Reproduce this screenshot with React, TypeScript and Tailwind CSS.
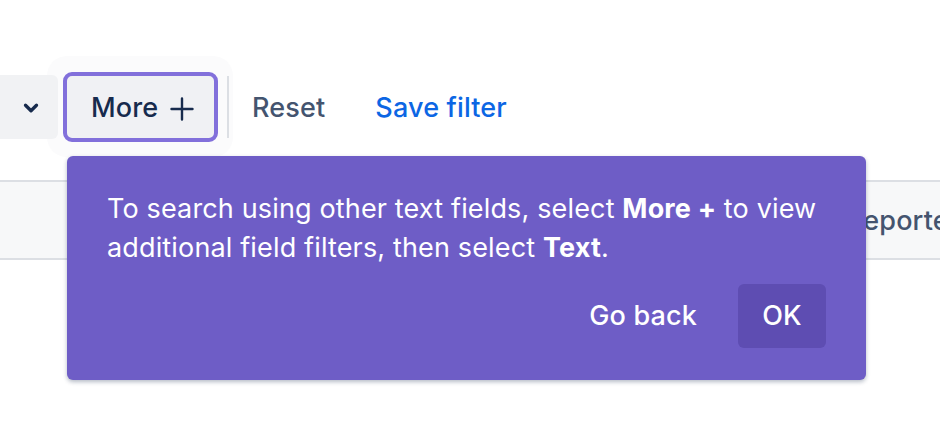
import { ChevronDown } from "lucide-react";

function PlusIcon() {
  return (
    <svg width="24" height="24" viewBox="0 0 24 24" className="text-[#172b4d]">
      <path d="M12 1.5v21M1.5 12h21" stroke="currentColor" strokeWidth="2.4" strokeLinecap="round" />
    </svg>
  );
}

export default function App() {
  return (
    <div className="relative w-[940px] h-[434px] overflow-hidden bg-white font-['Inter','Liberation_Sans',sans-serif] text-[27px] tracking-[0.15px]">
      {/* Filter toolbar */}
      <div className="flex items-center pt-[75px] h-[139px]">
        <button className="relative z-10 -ml-[20px] w-[78px] h-[64px] flex items-center justify-end pr-[16px] pt-[2px] rounded-r-[6px] bg-[#f1f2f4] text-[#172b4d]">
          <ChevronDown size={22} strokeWidth={3.6} />
        </button>

        <div className="relative ml-[8px]">
          {/* spotlight pulse */}
          <div className="absolute -left-[19px] -right-[18px] -top-[19px] -bottom-[18px] rounded-[20px] bg-[#fbfbfc]" />
          <button className="relative flex items-center h-[64px] w-[149px] pl-[25px] pt-[3px] rounded-[6px] bg-[#f0f1f4] text-[#172b4d] font-medium outline outline-[4px] outline-offset-[-1px] outline-[#8270db]">
            More
            <span className="ml-[12px] flex">
              <PlusIcon />
            </span>
          </button>
        </div>

        <div className="relative ml-[12px] w-[2px] h-[62px] bg-[#dcdfe4]" />

        <button className="ml-[23px] mt-[3px] font-medium text-[#44546f]">Reset</button>
        <button className="ml-[50px] mt-[3px] font-medium text-[#0c66e4]">Save filter</button>
      </div>

      {/* Table header */}
      <div className="mt-[41px] h-[80px] flex items-center pt-[2px] border-y-2 border-[#dcdfe4] bg-[#f7f8f9] pl-[846px]">
        <span className="font-medium text-[#44546f] whitespace-nowrap">Reporter</span>
      </div>

      {/* Spotlight popover */}
      <div className="absolute left-[67px] top-[156px] w-[799px] rounded-[6px] bg-[#6e5dc6] px-[40px] pt-[33px] pb-[32px] text-white shadow-[0_2px_4px_rgba(9,30,66,0.3)]">
        <p className="leading-[39px]">
          To search using other text fields, select <b className="font-bold">More +</b> to view additional field filters, then select <b className="font-bold">Text</b>.
        </p>
        <div className="mt-[17px] flex justify-end gap-[16px]">
          <button className="h-[64px] px-[25px] pt-[1px] rounded-[6px] font-medium">Go back</button>
          <button className="h-[64px] w-[88px] pt-[1px] rounded-[6px] bg-[#5e4db2] font-medium">OK</button>
        </div>
      </div>
    </div>
  );
}
